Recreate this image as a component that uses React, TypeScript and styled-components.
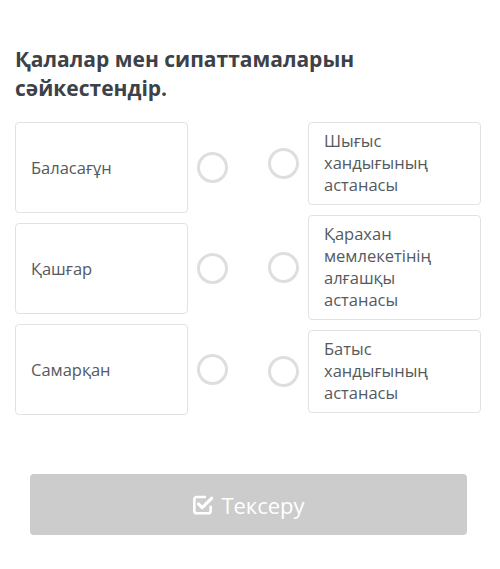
import { createGlobalStyle } from "styled-components";
import styled from "styled-components";

const GlobalStyle = createGlobalStyle`
  body {
    margin: 0;
    background: #ffffff;
    font-family: "Open Sans", "Noto Sans", sans-serif;
  }
`;

const Page = styled.div`
  padding: 45px 19px 0 15px;
`;

const Title = styled.h2`
  margin: 0;
  font-size: 21px;
  line-height: 29px;
  font-weight: 700;
  color: #3c4247;
`;

const Board = styled.div`
  display: grid;
  grid-template-columns: 213px 213px;
  justify-content: space-between;
  margin-top: 19px;
`;

const Column = styled.div`
  display: flex;
  flex-direction: column;
  gap: 10px;
`;

const Row = styled.div<{ $reverse?: boolean }>`
  display: flex;
  flex-direction: ${({ $reverse }) => ($reverse ? "row-reverse" : "row")};
  align-items: center;
  gap: 9px;
`;

const Card = styled.div<{ $tall?: boolean }>`
  box-sizing: border-box;
  width: 174px;
  min-height: ${({ $tall }) => ($tall ? 91 : 0)}px;
  display: flex;
  align-items: center;
  border: 1px solid #e2e2e2;
  border-radius: 4px;
  padding: ${({ $tall }) => ($tall ? "0 15px" : "7px 20px 8px 15px")};
  font-size: 16.5px;
  line-height: 22px;
  color: #555a5e;
  background: #fff;
`;

const Radio = styled.span`
  box-sizing: border-box;
  flex-shrink: 0;
  width: 31px;
  height: 31px;
  border-radius: 50%;
  border: 3px solid #dedede;
  background: #fff;
`;

const Footer = styled.div`
  padding: 59px 33px 0 30px;
`;

const CheckButton = styled.button`
  width: 100%;
  height: 61px;
  display: flex;
  align-items: center;
  justify-content: center;
  gap: 8px;
  border: none;
  border-radius: 4px;
  background: #cccccc;
  color: #ffffff;
  font-family: "Open Sans", "Noto Sans", sans-serif;
  font-size: 22px;
  cursor: default;
`;

const CheckIcon = () => (
  <svg width="21" height="21" viewBox="0 0 18 18" fill="none">
    <path
      d="M12 2.5H4a2 2 0 0 0-2 2v10a2 2 0 0 0 2 2h10a2 2 0 0 0 2-2V10"
      stroke="#fff"
      strokeWidth="2.2"
      strokeLinejoin="round"
    />
    <path
      d="M5.5 8.5l3.2 3.2L17 3.5"
      stroke="#fff"
      strokeWidth="2.6"
      strokeLinecap="round"
      strokeLinejoin="round"
    />
  </svg>
);

const cities = ["Баласағұн", "Қашғар", "Самарқан"];

const descriptions = [
  "Шығыс хандығының астанасы",
  "Қарахан мемлекетінің алғашқы астанасы",
  "Батыс хандығының астанасы",
];

export default function App() {
  return (
    <>
      <GlobalStyle />
      <Page>
        <Title>
          Қалалар мен сипаттамаларын
          <br />
          сәйкестендір.
        </Title>
        <Board>
          <Column>
            {cities.map((c) => (
              <Row key={c}>
                <Card $tall>{c}</Card>
                <Radio />
              </Row>
            ))}
          </Column>
          <Column>
            {descriptions.map((d) => (
              <Row key={d} $reverse>
                <Card>{d}</Card>
                <Radio />
              </Row>
            ))}
          </Column>
        </Board>
      </Page>
      <Footer>
        <CheckButton>
          <CheckIcon />
          Тексеру
        </CheckButton>
      </Footer>
    </>
  );
}
